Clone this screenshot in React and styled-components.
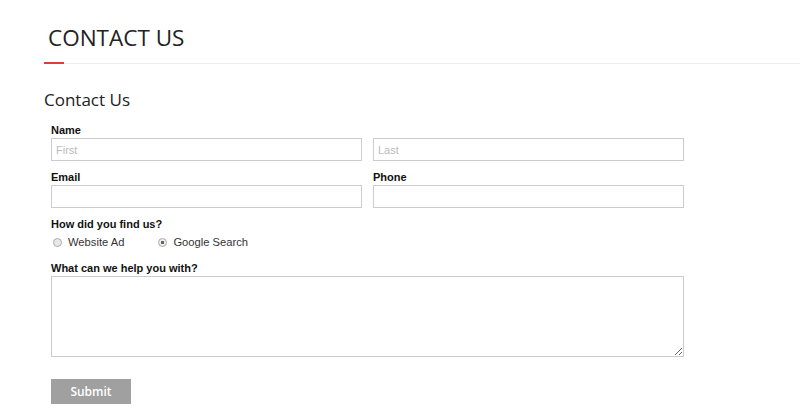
import React, { useState } from "react";
import styled, { createGlobalStyle } from "styled-components";

const GlobalStyle = createGlobalStyle`
  body {
    margin: 0;
    background: #fff;
    font-family: "Open Sans", sans-serif;
  }
`;

const App = () => {
  const [found, setFound] = useState("google");

  return (
    <>
      <GlobalStyle />
      <Page>
        <Header>
          <Title>CONTACT US</Title>
          <Rule>
            <Accent />
            <Line />
          </Rule>
        </Header>
        <Heading>Contact Us</Heading>
        <Form onSubmit={(e) => e.preventDefault()}>
          <Field>
            <Label>Name</Label>
            <Row>
              <Input type="text" placeholder="First" />
              <Input type="text" placeholder="Last" />
            </Row>
          </Field>
          <Row>
            <Field>
              <Label>Email</Label>
              <Input type="text" />
            </Field>
            <Field>
              <Label>Phone</Label>
              <Input type="text" />
            </Field>
          </Row>
          <Field>
            <Label>How did you find us?</Label>
            <Radios>
              <RadioLabel>
                <Radio $checked={found === "ad"} onClick={() => setFound("ad")} />
                Website Ad
              </RadioLabel>
              <RadioLabel>
                <Radio $checked={found === "google"} onClick={() => setFound("google")} />
                Google Search
              </RadioLabel>
            </Radios>
          </Field>
          <Field>
            <Label>What can we help you with?</Label>
            <TextArea />
          </Field>
          <Submit type="submit">Submit</Submit>
        </Form>
      </Page>
    </>
  );
};

export default App;

const Page = styled.div`
  padding: 24px 0 0 44px;
`;

const Header = styled.div`
  display: flex;
  flex-direction: column;
`;

const Title = styled.h1`
  margin: 0 0 0 4px;
  font-family: "Open Sans", sans-serif;
  font-weight: 400;
  font-size: 22.5px;
  line-height: 28px;
  color: #222;
`;

const Rule = styled.div`
  display: flex;
  align-items: flex-end;
  margin-top: 10px;
`;

const Accent = styled.div`
  width: 20px;
  height: 2px;
  background: #e03a3e;
`;

const Line = styled.div`
  flex: 1;
  height: 1px;
  background: #eee;
`;

const Heading = styled.h2`
  margin: 25px 0 0 0;
  font-family: "Open Sans", sans-serif;
  font-weight: 400;
  font-size: 17px;
  line-height: 22px;
  color: #222;
`;

const Form = styled.form`
  display: flex;
  flex-direction: column;
  gap: 10px;
  margin: 13px 0 0 7px;
  width: 633px;
`;

const Field = styled.div`
  display: flex;
  flex-direction: column;
`;

const Row = styled.div`
  display: flex;
  gap: 11px;

  & > * {
    flex: 1;
    min-width: 0;
  }
`;

const Label = styled.label`
  font-family: "Liberation Sans", Arial, sans-serif;
  font-weight: 700;
  font-size: 11px;
  line-height: 13px;
  color: #111;
  margin-bottom: 1px;
`;

const Input = styled.input`
  width: 100%;
  height: 23px;
  box-sizing: border-box;
  border: 1px solid #ccc;
  margin: 0;
  padding: 0 4px;
  font-family: "Liberation Sans", Arial, sans-serif;
  font-size: 11px;
  color: #333;
  outline: none;

  &::placeholder {
    color: #bbb;
  }
`;

const Radios = styled.div`
  display: flex;
  gap: 34px;
  height: 16px;
  padding-left: 2px;
  margin: 2px 0 2px 0;
`;

const RadioLabel = styled.span`
  display: flex;
  align-items: center;
  gap: 6px;
  font-family: "Liberation Sans", Arial, sans-serif;
  font-size: 11.2px;
  line-height: 16px;
  color: #333;
`;

const Radio = styled.span`
  width: 9px;
  height: 9px;
  box-sizing: border-box;
  border-radius: 50%;
  border: 1px solid #aaa;
  background: ${(p) =>
    p.$checked ? "radial-gradient(circle, #666 0 1.6px, #eee 2px)" : "#e8e8e8"};
  cursor: pointer;
`;

const TextArea = styled.textarea`
  height: 81px;
  box-sizing: border-box;
  border: 1px solid #ccc;
  margin: 0;
  resize: vertical;
  outline: none;
`;

const Submit = styled.button`
  width: 80px;
  height: 25px;
  margin-top: 12px;
  border: none;
  background: #a0a0a0;
  color: #fff;
  font-family: "Open Sans", sans-serif;
  font-weight: 600;
  font-size: 12px;
  cursor: pointer;
`;
